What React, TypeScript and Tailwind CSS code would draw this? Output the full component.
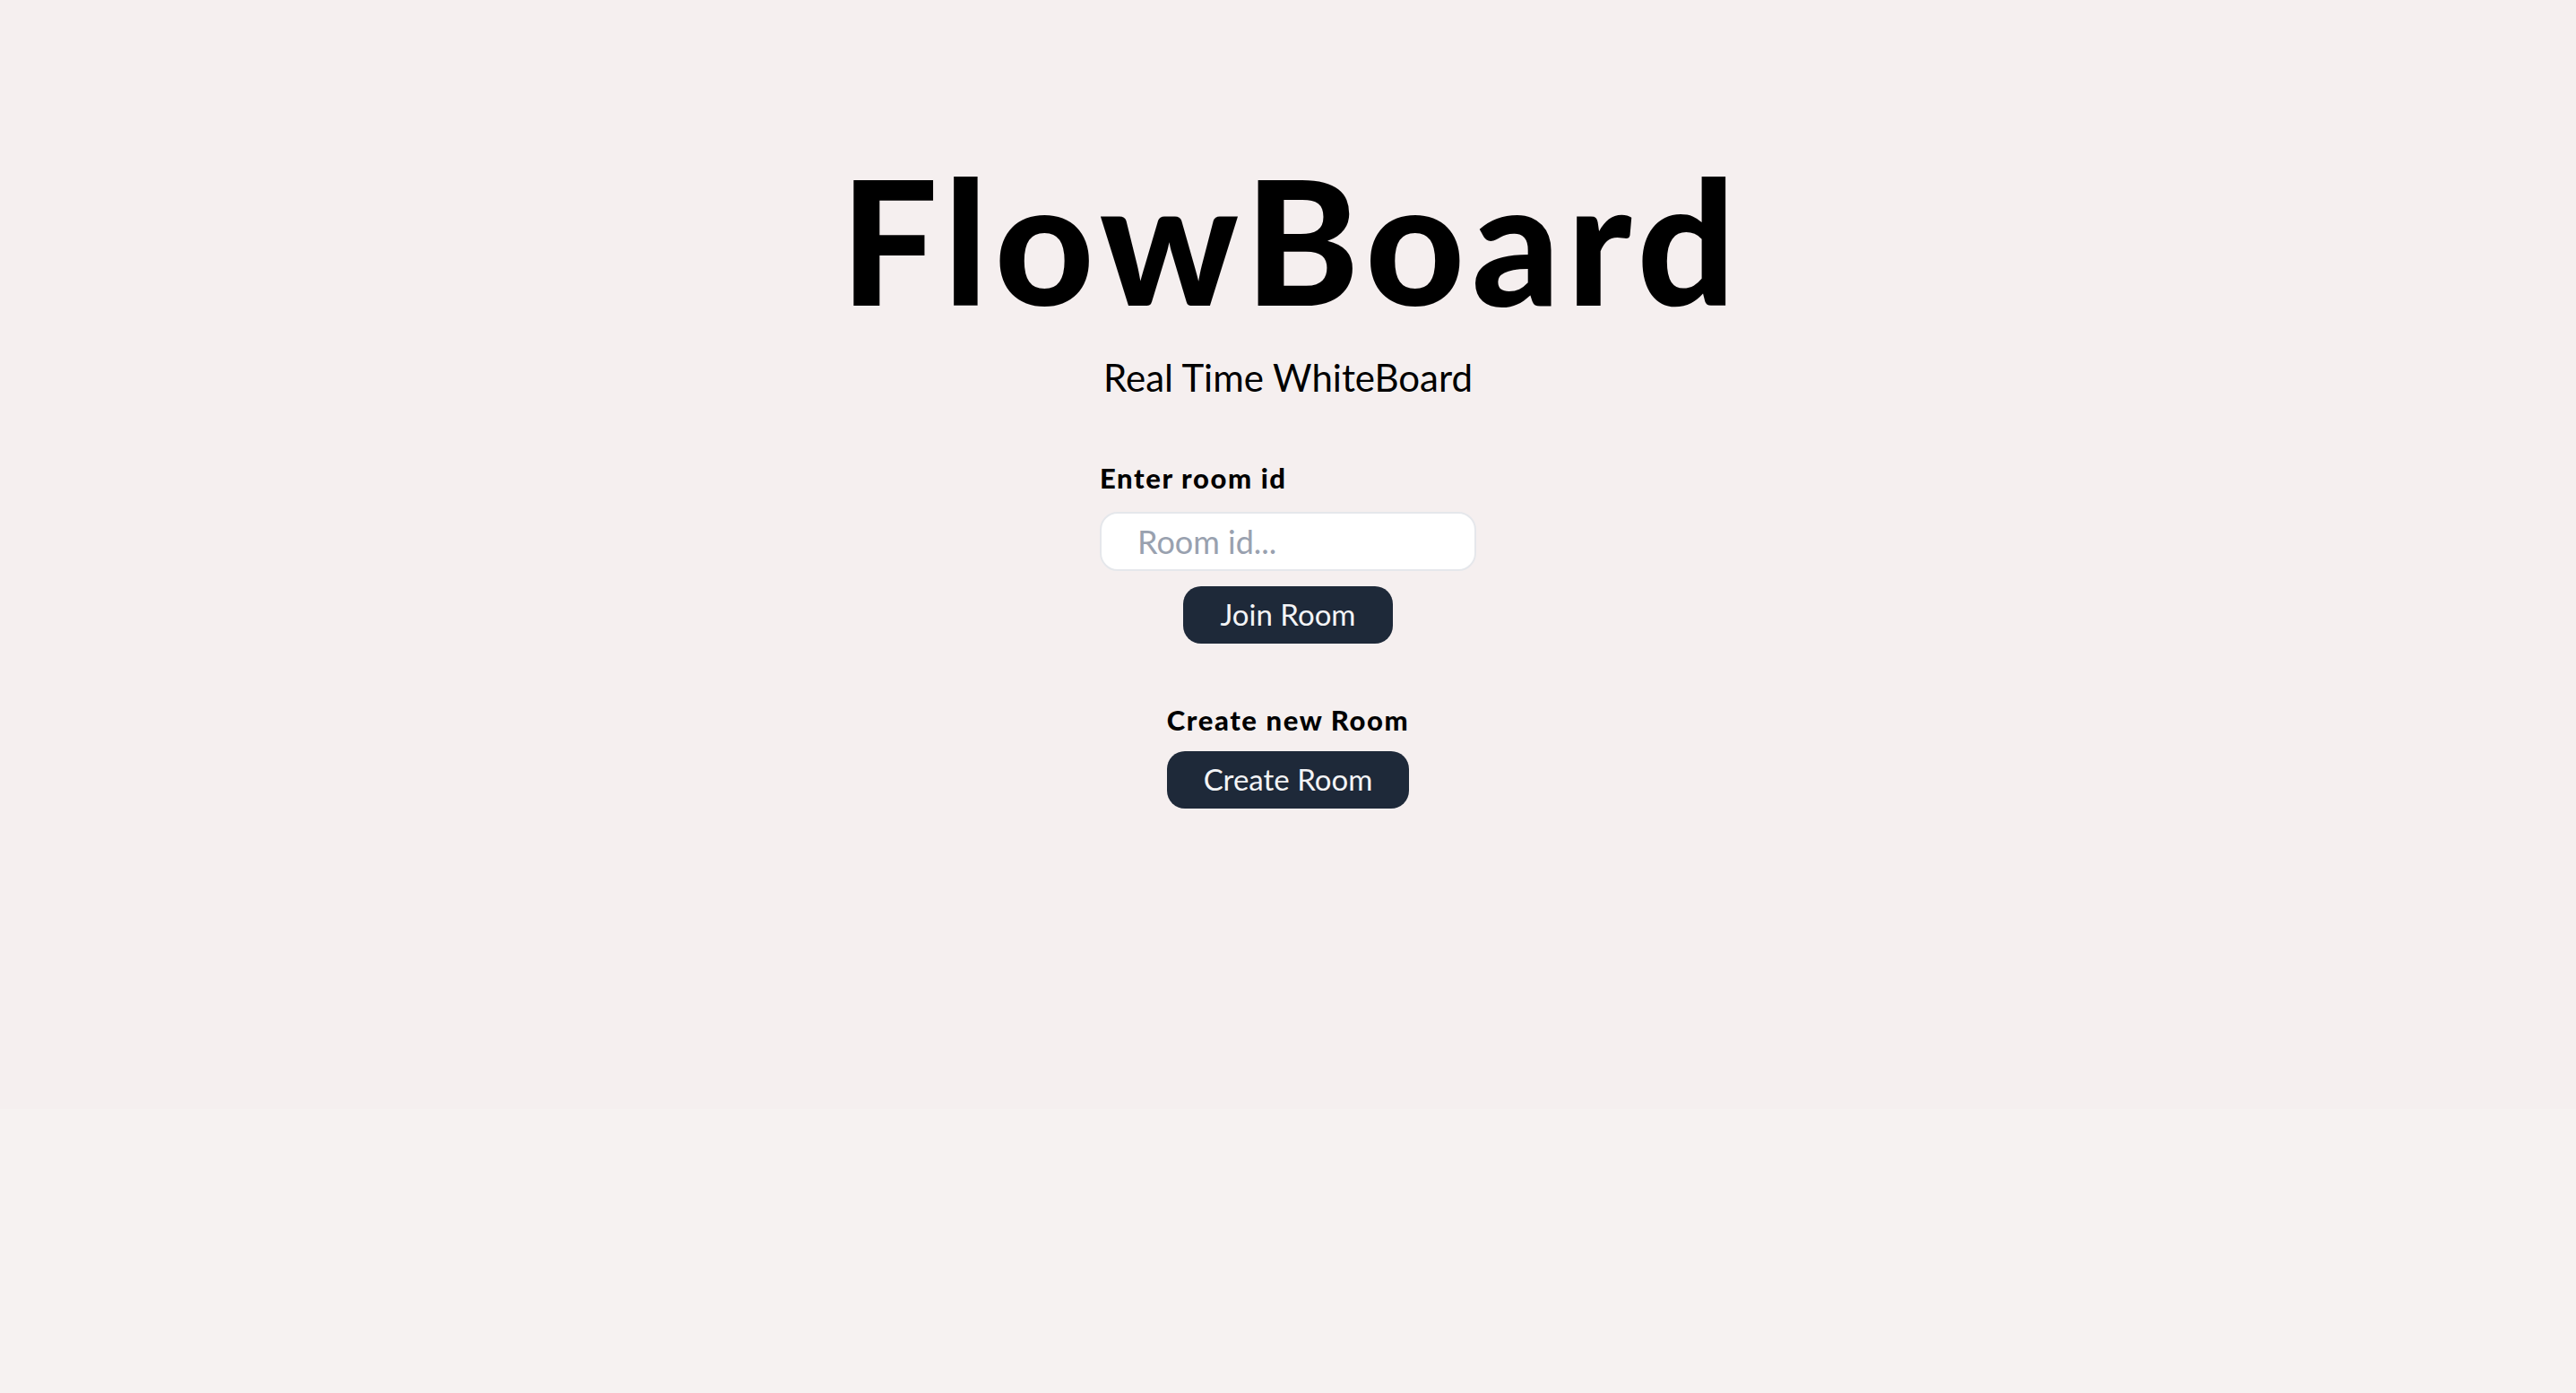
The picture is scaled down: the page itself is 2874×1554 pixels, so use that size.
import { useState } from 'react';

export default function App() {
  const [roomId, setRoomId] = useState('');

  return (
    <div className="min-h-screen bg-[#f6f2f1] font-['Lato',sans-serif] text-black">
      <div className="h-[1237px] bg-[#f5efef]">
        <div className="flex flex-col items-center pt-[171px]">
          {/* Title */}
          <h1 className="-mr-[8px] text-[192px] font-black leading-none tracking-[8px]">FlowBoard</h1>
          <p className="mt-[37px] text-[42px] leading-none">Real Time WhiteBoard</p>

          {/* Join */}
          <div className="mt-[76px] flex flex-col items-center">
            <div className="flex flex-col items-start">
              <label className="text-[31px] font-black leading-none tracking-[1.6px]">Enter room id</label>
              <input
                value={roomId}
                onChange={(e) => setRoomId(e.target.value)}
                placeholder="Room id..."
                className="mt-[22px] h-[66px] w-[420px] rounded-[20px] border-2 border-gray-200 bg-white px-[40px] text-[36px] outline-none placeholder:text-gray-400"
              />
            </div>
            <button className="mt-[17px] h-[64px] rounded-[20px] bg-gray-800 px-[41px] text-[33px] text-gray-100">
              Join Room
            </button>
          </div>

          {/* Create */}
          <div className="mt-[70px] flex flex-col items-center">
            <h2 className="text-[31px] font-black leading-none tracking-[1.6px]">Create new Room</h2>
            <button className="mt-[19px] h-[64px] rounded-[20px] bg-gray-800 px-[41px] text-[33px] text-gray-100">
              Create Room
            </button>
          </div>
        </div>
      </div>
    </div>
  );
}
